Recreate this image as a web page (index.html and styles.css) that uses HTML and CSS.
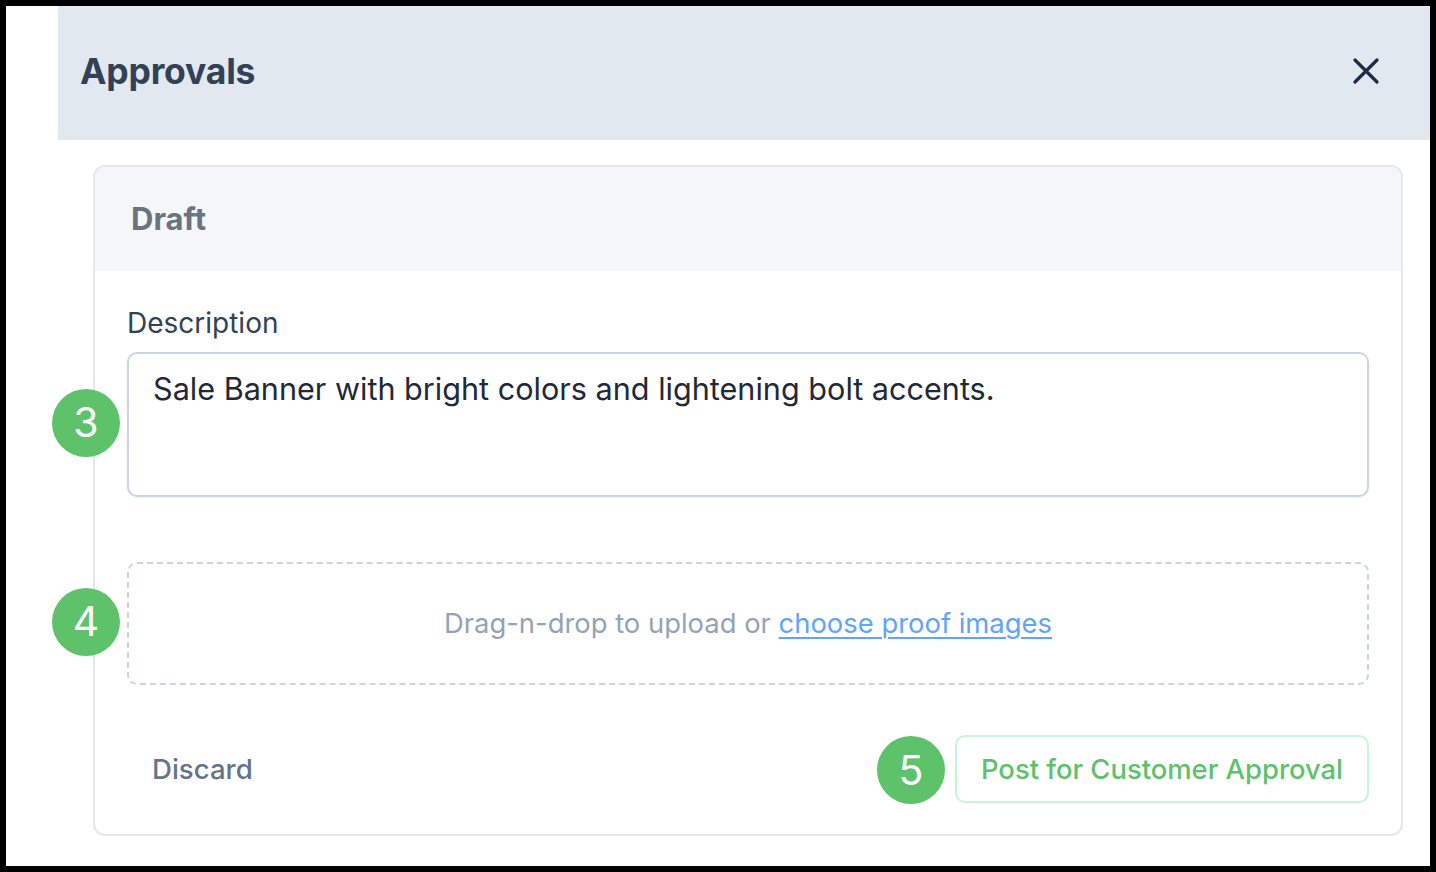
FILE: index.html
```html
<!DOCTYPE html>
<html lang="en">
<head>
<meta charset="utf-8">
<title>Approvals</title>
<link rel="stylesheet" href="styles.css">
</head>
<body>
<div class="frame">
  <div class="panel">
    <header class="panel-header">
      <h1 class="panel-title">Approvals</h1>
      <button class="close-btn" aria-label="Close">
        <svg width="28" height="28" viewBox="0 0 28 28" fill="none" stroke="#1e2b45" stroke-width="3.2" stroke-linecap="round">
          <path d="M3 3 L25 25 M25 3 L3 25"/>
        </svg>
      </button>
    </header>
    <div class="panel-body">
      <section class="card">
        <div class="card-header">Draft</div>
        <div class="card-body">
          <label class="field-label" for="desc">Description</label>
          <div class="field">
            <span class="badge badge-left">3</span>
            <div class="textarea" id="desc">Sale Banner with bright colors and lightening bolt accents.</div>
          </div>
          <div class="field dropzone-wrap">
            <span class="badge badge-left">4</span>
            <div class="dropzone">Drag-n-drop to upload or <a class="link" href="#">choose proof images</a></div>
          </div>
          <div class="actions">
            <button class="discard">Discard</button>
            <div class="post-wrap">
              <span class="badge badge-inline">5</span>
              <button class="post">Post for Customer Approval</button>
            </div>
          </div>
        </div>
      </section>
    </div>
  </div>
</div>
</body>
</html>
```

FILE: styles.css
```css
* { box-sizing: border-box; }
html, body { margin: 0; padding: 0; }
body {
  background: #000;
  font-family: Inter, "Noto Sans", "Liberation Sans", sans-serif;
  width: 1436px;
  height: 872px;
  overflow: hidden;
}
.frame {
  margin: 6px;
  width: 1424px;
  height: 860px;
  background: #fff;
  padding-left: 52px;
}
.panel { height: 100%; }
.panel-header {
  height: 134px;
  background: #e2e8f0;
  display: flex;
  align-items: center;
  justify-content: space-between;
  padding: 0 50px 4px 22px;
}
.panel-title {
  margin: 0;
  font-size: 35.5px;
  font-weight: 700;
  color: #334155;
  letter-spacing: -0.2px;
}
.close-btn {
  background: none;
  border: 0;
  padding: 0;
  width: 28px;
  height: 28px;
  display: flex;
  margin-top: -1px;
}
.panel-body {
  padding: 25px 27px 0 35px;
}
.card {
  border: 2px solid #e5e7eb;
  border-radius: 12px;
  overflow: visible;
  height: 671px;
}
.card-header {
  height: 104px;
  background: #f5f6f8;
  border-radius: 10px 10px 0 0;
  display: flex;
  align-items: center;
  padding-left: 36px;
  padding-bottom: 2px;
  font-size: 31px;
  font-weight: 700;
  color: #6b7280;
}
.card-body {
  padding: 35px 32px 0 32px;
}
.field-label {
  display: block;
  font-size: 28px;
  color: #334155;
  line-height: 34px;
  margin-bottom: 12px;
}
.field { position: relative; }
.textarea {
  height: 145px;
  border: 2px solid #cbd5e1;
  border-radius: 10px;
  padding: 16px 24px;
  font-size: 30.6px;
  line-height: 38px;
  color: #1f2937;
  box-shadow: 0 1px 2px rgba(0,0,0,0.05);
}
.dropzone-wrap { margin-top: 65px; }
.dropzone {
  height: 123px;
  border: 2px dashed #cbd5e1;
  border-radius: 10px;
  display: flex;
  align-items: center;
  justify-content: center;
  font-size: 27.4px;
  color: #94a3b8;
  padding-bottom: 2px;
  white-space: pre;
}
.link {
  color: #60a5fa;
  text-decoration: underline;
  text-underline-offset: 4px;
  text-decoration-thickness: 2px;
}
.badge {
  width: 68px;
  height: 68px;
  border-radius: 50%;
  background: #5ec26a;
  color: #fff;
  font-size: 41px;
  display: flex;
  align-items: center;
  justify-content: center;
  line-height: 1;
}
.badge-left {
  position: absolute;
  left: -75px;
  top: 50%;
  transform: translateY(-50%);
  margin-top: -2px;
}
.actions {
  margin-top: 49px;
  display: flex;
  align-items: center;
  justify-content: space-between;
}
.discard {
  background: none;
  border: 0;
  font-family: inherit;
  font-size: 27.6px;
  font-weight: 500;
  color: #64748b;
  padding: 0 0 0 25px;
}
.post-wrap {
  display: flex;
  align-items: center;
  gap: 10px;
}
.badge-inline { margin-top: 2px; }
.post {
  height: 68px;
  background: #fff;
  border: 2px solid #c6f6d5;
  border-radius: 10px;
  padding: 0 24px;
  font-family: inherit;
  font-size: 27.4px;
  font-weight: 500;
  color: #5ec26a;
}
```
